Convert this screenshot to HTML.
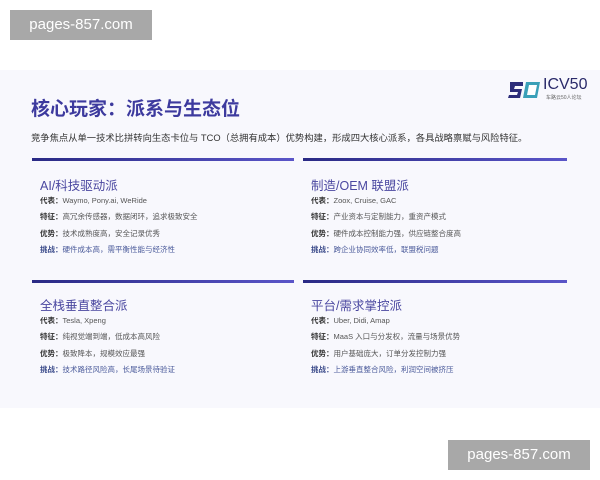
<!DOCTYPE html>
<html><head><meta charset="utf-8"><style>
*{margin:0;padding:0;box-sizing:border-box}
body{width:600px;height:480px;background:#fff;position:relative;overflow:hidden;font-family:"Liberation Sans","Noto Sans CJK SC",sans-serif}
.slide{position:absolute;left:0;top:70px;width:600px;height:338px;background:#f8f8fd}
.wm{position:absolute;background:#a8a8a8;color:#fff;font-size:15px;line-height:30px;text-align:center;width:142px;height:30px}
.title{position:absolute;left:31px;top:94px;font-size:19px;font-weight:bold;color:#3d3a9e}
.sub{position:absolute;left:31px;top:130px;font-size:9.3px;color:#333}
.bar{position:absolute;height:3px;background:linear-gradient(90deg,#2a2a85,#5a55c8)}
.card{position:absolute}
.card h3{font-size:12.5px;font-weight:normal;color:#4a47a0;margin-bottom:4px;height:17px}
.card p{font-size:7.5px;color:#555;height:16.3px;line-height:10px}
.card p b{color:#333}
.card p.c{color:#4a5a9a}
.card p.c b{color:#3a4a8a}
</style></head><body>
<div class="wm" style="left:10px;top:10px">pages-857.com</div>
<div class="slide"></div>
<div class="wm" style="left:448px;top:440px">pages-857.com</div>
<svg style="position:absolute;left:507px;top:80px" width="34" height="20" viewBox="0 0 34 20">
<path d="M3 2h13v4H8l-1 3h8l-2 9H1l1-3h8l1-3H3z" fill="#2d2d7a"/>
<path d="M19 2h14l-3 16H16z" fill="#3aa0b8"/><path d="M22 5h8l-2 10h-8z" fill="#fff"/>
</svg>
<div style="position:absolute;left:543px;top:76px;font-size:16px;color:#2a2a6a">ICV50</div>
<div style="position:absolute;left:546px;top:94px;font-size:5px;color:#666">车路云50人论坛</div>
<div class="title">核心玩家：派系与生态位</div>
<div class="sub">竞争焦点从单一技术比拼转向生态卡位与 TCO（总拥有成本）优势构建，形成四大核心派系，各具战略禀赋与风险特征。</div>
<div class="bar" style="left:32px;top:158px;width:262px"></div>
<div class="bar" style="left:303px;top:158px;width:264px"></div>
<div class="bar" style="left:32px;top:280px;width:262px"></div>
<div class="bar" style="left:303px;top:280px;width:264px"></div>
<div class="card" style="left:40px;top:175px"><h3>AI/科技驱动派</h3>
<p><b>代表：</b>Waymo, Pony.ai, WeRide</p><p><b>特征：</b>高冗余传感器，数据闭环，追求极致安全</p><p><b>优势：</b>技术成熟度高，安全记录优秀</p><p class="c"><b>挑战：</b>硬件成本高，需平衡性能与经济性</p></div>
<div class="card" style="left:311px;top:175px"><h3>制造/OEM 联盟派</h3>
<p><b>代表：</b>Zoox, Cruise, GAC</p><p><b>特征：</b>产业资本与定制能力，重资产模式</p><p><b>优势：</b>硬件成本控制能力强，供应链整合度高</p><p class="c"><b>挑战：</b>跨企业协同效率低，联盟税问题</p></div>
<div class="card" style="left:40px;top:295px"><h3>全栈垂直整合派</h3>
<p><b>代表：</b>Tesla, Xpeng</p><p><b>特征：</b>纯视觉端到端，低成本高风险</p><p><b>优势：</b>极致降本，规模效应最强</p><p class="c"><b>挑战：</b>技术路径风险高，长尾场景待验证</p></div>
<div class="card" style="left:311px;top:295px"><h3>平台/需求掌控派</h3>
<p><b>代表：</b>Uber, Didi, Amap</p><p><b>特征：</b>MaaS 入口与分发权，流量与场景优势</p><p><b>优势：</b>用户基础庞大，订单分发控制力强</p><p class="c"><b>挑战：</b>上游垂直整合风险，利润空间被挤压</p></div>
</body></html>
